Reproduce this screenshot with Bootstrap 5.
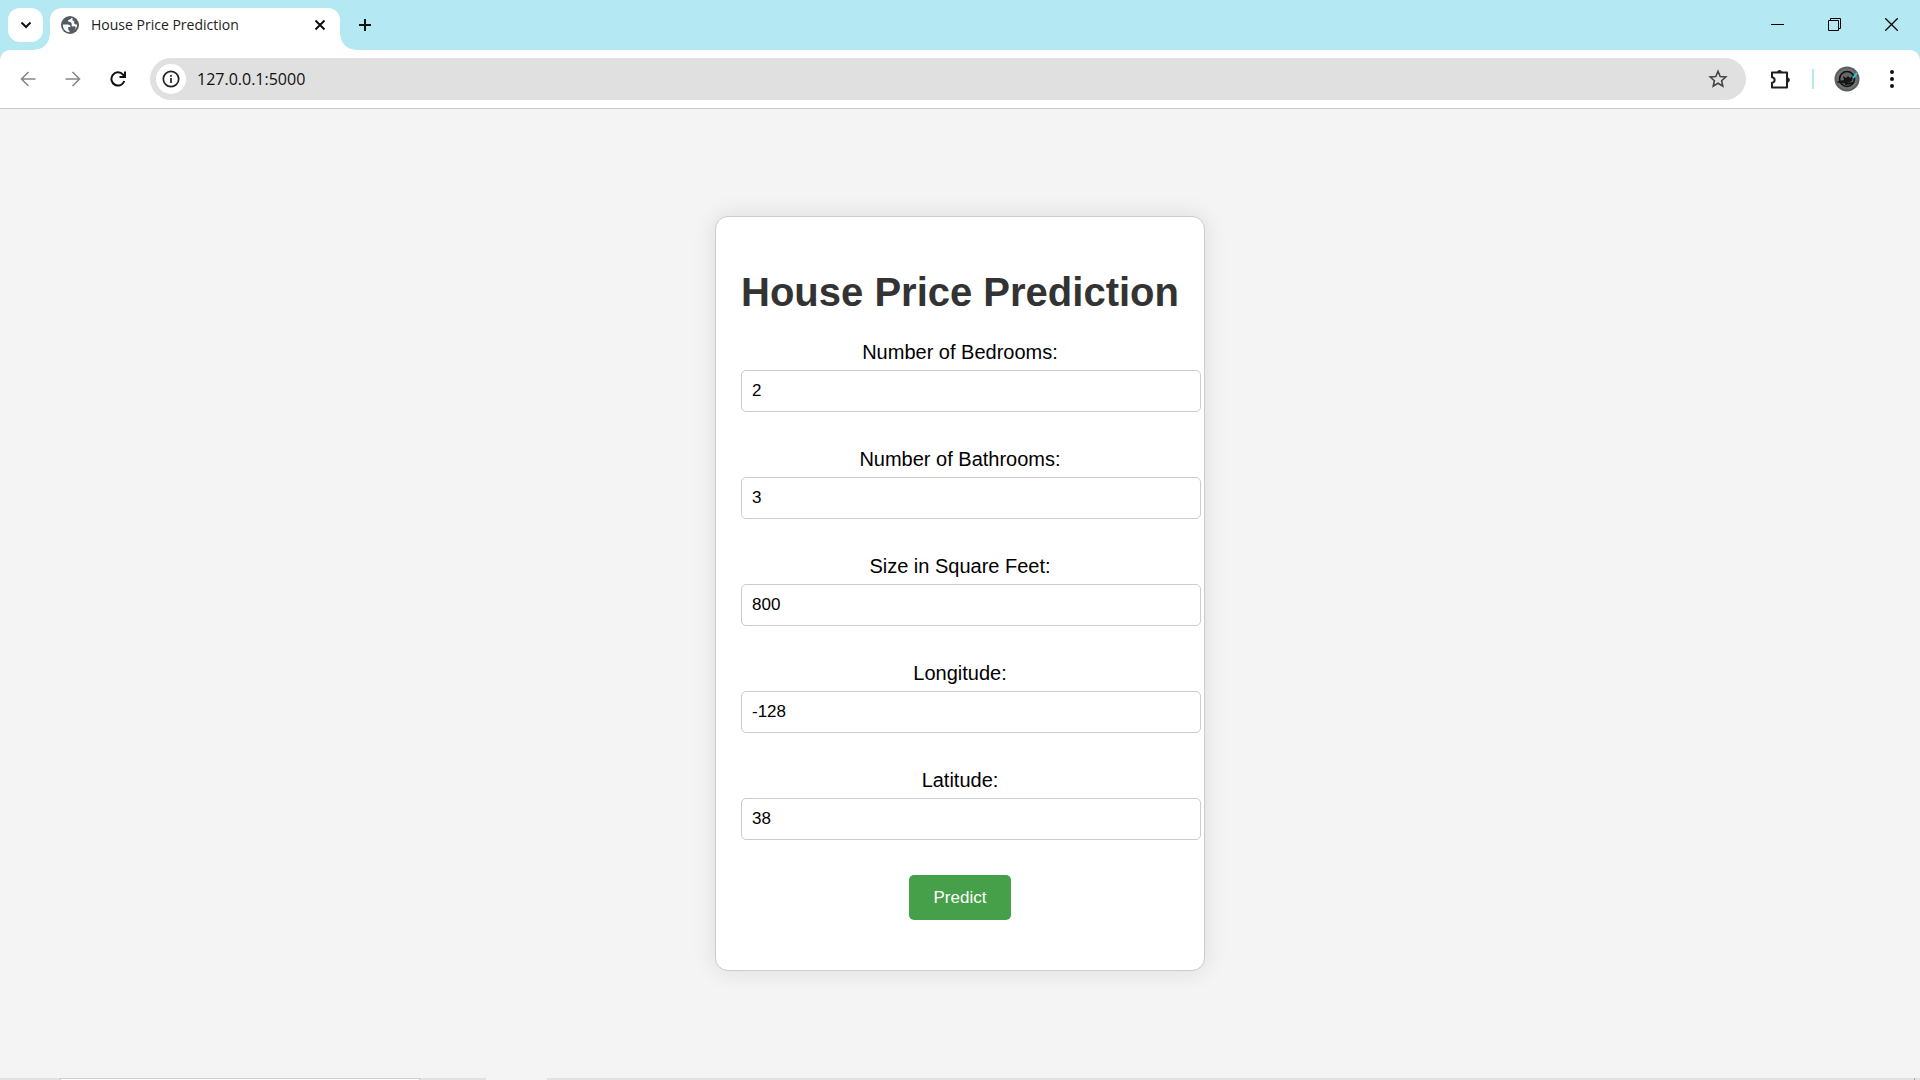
<!DOCTYPE html>
<html lang="en">
<head>
<meta charset="utf-8">
<meta name="viewport" content="width=device-width, initial-scale=1">
<title>House Price Prediction</title>
<link href="https://cdn.jsdelivr.net/npm/bootstrap@5.3.0/dist/css/bootstrap.min.css" rel="stylesheet">
<style>
body { font-family: "Liberation Sans", Arial, sans-serif; background: #f4f4f4; color: #000; }
button { padding: 0; border: 0; background: none; color: inherit; }
svg { display: block; }
.chrome-font { font-family: "Open Sans", "Noto Sans", sans-serif; }
.tab-strip { background: #b4e8f3; height: 50px; padding-left: 8px; }
.tab-search { width: 35px; height: 34px; border-radius: 12px; background: #fff; margin-top: 8px; }
.active-tab { width: 290px; height: 42px; margin: 8px 0 0 7px; padding: 0 12px 8px 11px; border-radius: 12px 12px 0 0; background: #fff; font-size: 14px; line-height: 20px; color: #222; }
.active-tab::before, .active-tab::after { content: ""; position: absolute; bottom: 0; width: 15px; height: 15px; }
.active-tab::before { right: 100%; background: radial-gradient(circle at 0 0, #b4e8f3 14px, #fff 15px); }
.active-tab::after { left: 100%; background: radial-gradient(circle at 100% 0, #b4e8f3 14px, #fff 15px); }
.new-tab { width: 50px; height: 50px; }
.win-btn { width: 57px; height: 48px; }
.bar-wrap { background: #b4e8f3; }
.tool-bar { height: 59px; background: #fff; border-bottom: 1px solid #ccc; border-radius: 10px 10px 0 0; padding: 0 8px 0 5px; }
.nav-btn { width: 45px; height: 42px; }
.menu-btn { width: 40px; height: 42px; margin-left: 12px; }
.address { height: 42px; border-radius: 21px; background: #e0e0e0; padding: 0 18px 0 6px; margin: 0 17px 0 10px; }
.info-btn { width: 30px; height: 30px; border-radius: 15px; background: #fff; }
.address input { border: 0; outline: 0; background: none; font-size: 16px; line-height: 24px; padding: 0 0 0 11px; color: #111; }
.tool-rule { width: 2px; height: 20px; background: #b4e8f3; margin: 0 20px 0 19px; }
.predict-card { padding: 25px; border: 1px solid #ccc; border-radius: 13px; background: #fff; box-shadow: 0 0 24px rgba(0, 0, 0, .1); width: 490px; max-width: 100%; }
.predict-card h1 { font-size: 40px; line-height: 46px; font-weight: 700; color: #333; margin: 27px 0 25px; white-space: nowrap; }
.predict-card label { font-size: 20px; line-height: 24px; margin-bottom: 6px; }
.field-box { display: block; width: calc(100% + 22px); height: 42px; padding: 0 10px; border: 1px solid #ccc; border-radius: 5px; font-size: 17px; line-height: 20px; color: #000; background: #fff; margin-bottom: 35px; }
.predict-btn { width: 102px; height: 45px; border-radius: 5px; background: #45a049; color: #fff; font-size: 17px; line-height: 20px; margin-bottom: 25px; }
.task-edge { height: 2px; }
.edge-grey { background: #e1e1e1; }
.edge-start { width: 60px; }
.edge-search { width: 360px; background: #fff; border: 1px solid #ccc; border-bottom: 0; }
.edge-button { width: 66px; }
.edge-active { width: 61px; }
.edge-desktop { width: 6px; border-left: 1px solid #aaa; }
</style>
</head>
<body class="d-flex flex-column vh-100 overflow-hidden">
<header class="flex-shrink-0">
  <div class="tab-strip d-flex">
    <button class="tab-search d-flex align-items-center justify-content-center position-relative z-1" aria-label="Search tabs"><svg width="12" height="8" viewBox="0 0 12 8" fill="none" stroke="#111" stroke-width="2"><path d="M1.500 1.500 6 6l4.500-4.500"/></svg></button>
    <div class="active-tab position-relative d-flex align-items-center chrome-font">
      <svg width="18" height="18" viewBox="0 0 18 18"><circle cx="9" cy="9" r="9" fill="#555b62"/><path d="M2 8.500h4.500C8.700 8.500 9.500 9.700 9.500 11H7.200v2.200c0 .9.600 1.500 1.300 1.500v1.500C4.500 16 1.500 12.600 2 8.500z" fill="#fff"/><path d="M10.200 1.900c-.2 1.900-2.900 1.200-3.200 2.900-.2 1.700 2.900.7 3.600 2.400.5 1.600-.6 2.300.5 3 1.300.6 3-.5 3.500.8.200 1-.7 2.400-1.700 3.200 2.400-1.400 3.400-3.600 3.200-5.700-1.300-.1-2.500-.1-2.900-1.200-.3-1.100.4-1.700-.3-2.400-.8-.5-1.500-.2-1.500-1.200 0-.7.400-1 .7-1.300z" fill="#fff"/></svg>
      <span class="flex-grow-1 ps-2 ms-1">House Price Prediction</span>
      <button aria-label="Close tab"><svg width="16" height="16" viewBox="0 0 16 16" stroke="#111" stroke-width="2"><path d="m3.500 3.500 9 9m0-9-9 9"/></svg></button>
    </div>
    <button class="new-tab d-flex align-items-center justify-content-center" aria-label="New tab"><svg width="14" height="14" viewBox="0 0 14 14" stroke="#111" stroke-width="2"><path d="M7 1v12M1 7h12"/></svg></button>
    <div class="d-flex ms-auto">
      <button class="win-btn d-flex align-items-center justify-content-center" aria-label="Minimize"><svg width="13" height="13" viewBox="0 0 13 13" stroke="#000"><path d="M0 6.500h13"/></svg></button>
      <button class="win-btn d-flex align-items-center justify-content-center" aria-label="Restore"><svg width="13" height="13" viewBox="0 0 13 13" fill="none" stroke="#000"><path d="M.5 2.500h10v10H.500zM2.500 2.500v-2h10v10h-2"/></svg></button>
      <button class="win-btn d-flex align-items-center justify-content-center" aria-label="Close"><svg width="13" height="13" viewBox="0 0 13 13" stroke="#000" stroke-width="1.300"><path d="m.3.300 12.400 12.400m0-12.400L.3 12.700"/></svg></button>
    </div>
  </div>
  <div class="bar-wrap">
    <div class="tool-bar d-flex align-items-center">
      <button class="nav-btn d-flex align-items-center justify-content-center" aria-label="Back"><svg width="16" height="16" viewBox="0 0 16 16" fill="none" stroke="#888" stroke-width="1.600"><path d="M15.500 8H2m6.500-7L1.500 8l7 7"/></svg></button>
      <button class="nav-btn d-flex align-items-center justify-content-center" aria-label="Forward"><svg width="16" height="16" viewBox="0 0 16 16" fill="none" stroke="#888" stroke-width="1.600"><path d="M.5 8H14M7.500 1l7 7-7 7"/></svg></button>
      <button class="nav-btn d-flex align-items-center justify-content-center" aria-label="Reload"><svg width="16" height="16" viewBox="0 0 16 16" fill="none" stroke="#111" stroke-width="2"><path d="M14.300 10A6.600 6.600 0 1 1 13 3.600L14.500 5.500"/><path d="M15 .5V6H9.500" /></svg></button>
      <div class="address d-flex align-items-center flex-grow-1">
        <button class="info-btn d-flex align-items-center justify-content-center" aria-label="Site information"><svg width="18" height="18" viewBox="0 0 18 18" fill="none" stroke="#222" stroke-width="1.700"><circle cx="9" cy="9" r="7.700"/><path d="M9 8v5M9 5v1.700"/></svg></button>
        <input class="chrome-font flex-grow-1" type="text" value="127.0.0.1:5000" aria-label="Address">
        <button aria-label="Bookmark this tab"><svg width="20" height="20" viewBox="0 0 20 20" fill="none" stroke="#444" stroke-width="1.600"><path d="m10 2.300 2.200 5.200 5.600.5-4.200 3.700 1.200 5.500L10 14.300l-4.800 2.900 1.200-5.500L2.200 8l5.600-.5z"/></svg></button>
      </div>
      <button class="ms-1" aria-label="Extensions"><svg width="26" height="22" viewBox="0 0 26 22"><path d="M5 4.500h15v15H5v-4.800c3.500-.5 3.500-4.900 0-5.400z" fill="none" stroke="#1f1f1f" stroke-width="2" stroke-linejoin="round"/><path d="M10 4a2.600 2.600 0 0 1 5 0zM21 9.500a2.600 2.600 0 0 1 0 5z" fill="#1f1f1f"/></svg></button>
      <span class="tool-rule"></span>
      <button aria-label="Profile"><svg width="26" height="26" viewBox="0 0 26 26"><circle cx="13" cy="13" r="12.500" fill="#5c5f60"/><circle cx="13" cy="13" r="10.500" fill="#707273"/><circle cx="13" cy="13" r="7.500" fill="#656768" stroke="#111" stroke-width="1.600"/><path d="M3 15.500 10 14l-1-4 3 2 2-2 2 2 3-2-1 5-6 2.500-8-.5z" fill="#151515"/><path d="m11 18 8-1" stroke="#111" stroke-width="2"/><path d="m19 12 4-5" stroke="#18d5e8" stroke-width="2"/></svg></button>
      <button class="menu-btn d-flex align-items-center justify-content-center" aria-label="Menu"><svg width="4" height="18" viewBox="0 0 4 18" fill="#111"><circle cx="2" cy="2" r="2"/><circle cx="2" cy="9" r="2"/><circle cx="2" cy="16" r="2"/></svg></button>
    </div>
  </div>
</header>
<main class="flex-grow-1 d-flex align-items-center justify-content-center">
  <form class="predict-card text-center">
    <h1>House Price Prediction</h1>
    <label for="bedrooms">Number of Bedrooms:</label>
    <input class="field-box" id="bedrooms" type="text" value="2">
    <label for="bathrooms">Number of Bathrooms:</label>
    <input class="field-box" id="bathrooms" type="text" value="3">
    <label for="sqft">Size in Square Feet:</label>
    <input class="field-box" id="sqft" type="text" value="800">
    <label for="longitude">Longitude:</label>
    <input class="field-box" id="longitude" type="text" value="-128">
    <label for="latitude">Latitude:</label>
    <input class="field-box" id="latitude" type="text" value="38">
    <button class="predict-btn" type="button">Predict</button>
  </form>
</main>
<footer class="task-edge d-flex flex-shrink-0">
  <div class="edge-grey edge-start"></div>
  <div class="edge-search"></div>
  <div class="edge-grey edge-button"></div>
  <div class="edge-active"></div>
  <div class="edge-grey flex-grow-1"></div>
  <div class="edge-grey edge-desktop"></div>
</footer>
<script src="https://cdn.jsdelivr.net/npm/bootstrap@5.3.0/dist/js/bootstrap.bundle.min.js"></script>
</body>
</html>
